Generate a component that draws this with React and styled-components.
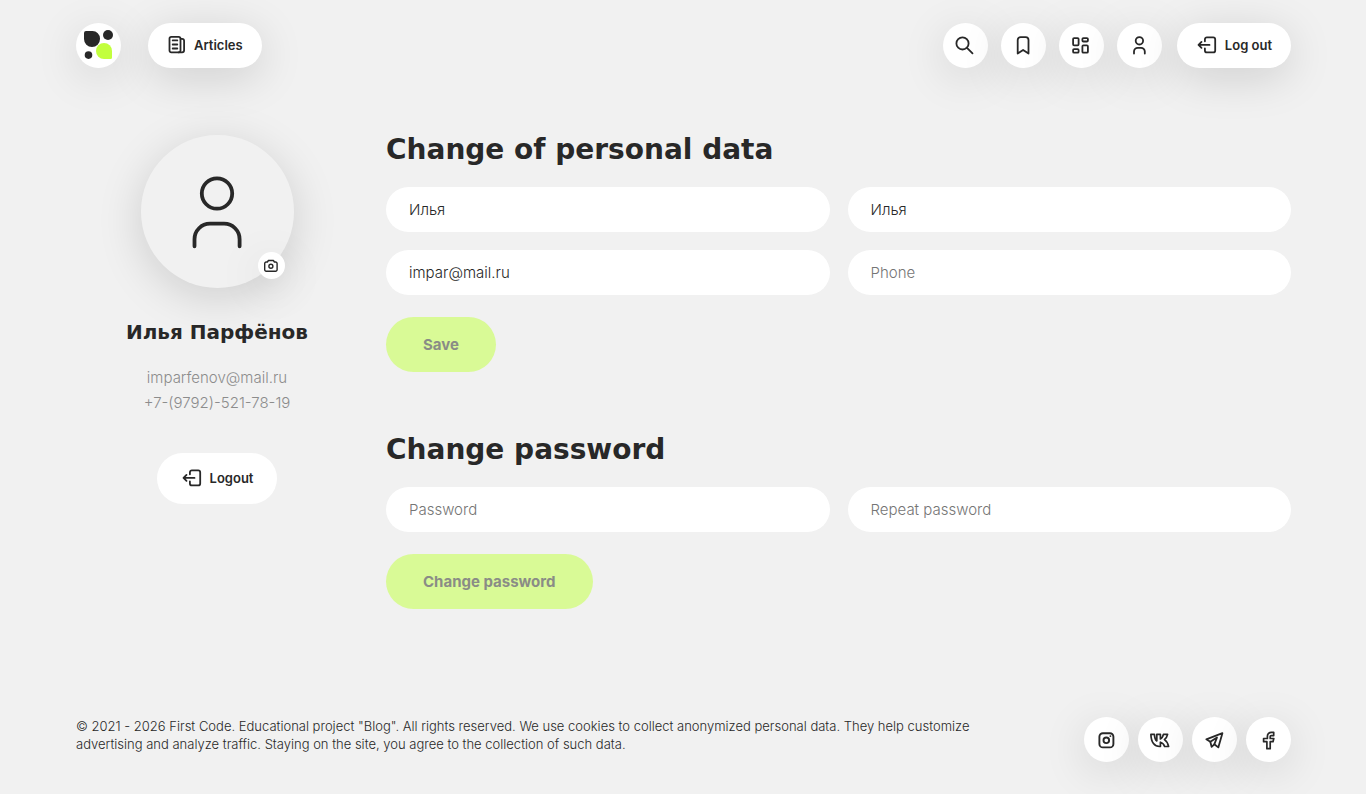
import React, { useState } from 'react';
import styled, { createGlobalStyle } from 'styled-components';

const GlobalStyle = createGlobalStyle`
  * {
    box-sizing: border-box;
  }
  body {
    margin: 0;
    background: #f1f1f1;
    color: #282828;
    font-family: Inter, "Open Sans", sans-serif;
    font-size: 14px;
  }
  h2, h3, p {
    margin: 0;
  }
  input, button {
    font-family: inherit;
  }
`

const initialProfile = {
  name: "Илья",
  surname: "Илья",
  email: "impar@mail.ru",
  phone: ""
}

const initialPasswords = {
  password: "",
  repeat: ""
}

const Page = styled.div`
  padding: 23px 75px 32px 76px;
`
const Header = styled.header`
  display: flex;
  justify-content: space-between;
  align-items: center;
  margin-bottom: 67px;
`
const HeaderSide = styled.nav`
  display: flex;
  align-items: center;
  gap: ${props => props.$gap}px;
`
const RoundLink = styled.a`
  display: flex;
  justify-content: center;
  align-items: center;
  flex-shrink: 0;
  width: 45px;
  height: 45px;
  border-radius: 50%;
  background: white;
  color: inherit;
  box-shadow: 0 9px 45px rgba(0, 0, 0, 0.13);
`
const Pill = styled.button`
  display: flex;
  align-items: center;
  gap: 7px;
  height: ${props => props.$flat ? 51 : 45}px;
  padding: 0 ${props => props.$flat ? 24 : 19}px 2px;
  border: none;
  border-radius: 26px;
  background: white;
  color: inherit;
  font-size: 13px;
  font-weight: 600;
  text-decoration: none;
  cursor: pointer;
  box-shadow: ${props => props.$flat ? 'none' : '0 9px 45px rgba(0, 0, 0, 0.15)'};
`
const Content = styled.div`
  display: flex;
  align-items: flex-start;
  gap: 28px;
  margin-bottom: 108px;
`
const Sidebar = styled.aside`
  display: flex;
  flex-direction: column;
  align-items: center;
  flex: 0 0 282px;
`
const Avatar = styled.div`
  position: relative;
  display: flex;
  justify-content: center;
  align-items: center;
  width: 153px;
  height: 153px;
  margin-bottom: 30px;
  border-radius: 50%;
  box-shadow: 0 9px 45px rgba(0, 0, 0, 0.15);
`
const CameraButton = styled.button`
  position: absolute;
  right: 9px;
  bottom: 9px;
  display: flex;
  justify-content: center;
  align-items: center;
  width: 27px;
  height: 27px;
  padding: 0;
  border: none;
  border-radius: 50%;
  background: white;
  color: inherit;
  cursor: pointer;
  box-shadow: 0 9px 45px rgba(0, 0, 0, 0.13);
`
const UserName = styled.h3`
  margin-bottom: 19px;
  font-family: "DejaVu Sans", sans-serif;
  font-size: 20px;
  line-height: 28px;
`
const Contact = styled.p`
  color: #8c8c8c;
  font-size: 15px;
  font-weight: 300;
  line-height: 25px;
`
const Contacts = styled.div`
  margin-bottom: 38px;
  text-align: center;
`
const Main = styled.main`
  flex: 1;
  min-width: 0;
`
const Form = styled.form`
  & + & {
    margin-top: 63px;
  }
`
const Title = styled.h2`
  margin-bottom: 22px;
  font-family: "DejaVu Sans", sans-serif;
  font-size: 28px;
  line-height: 30px;
`
const Fields = styled.div`
  display: grid;
  grid-template-columns: 1fr 1fr;
  gap: 18px;
  margin-bottom: 22px;
`
const Input = styled.input`
  width: 100%;
  height: 45px;
  padding: 0 23px;
  border: none;
  border-radius: 23px;
  background: white;
  color: #282828;
  font-size: 15px;
  font-weight: 300;
  outline: none;

  &::placeholder {
    color: #757575;
    opacity: 1;
  }
`
const Submit = styled.button`
  height: 55px;
  padding: 0 37px;
  border: none;
  border-radius: 28px;
  background: #d9fa96;
  color: #8a8c86;
  font-size: 15px;
  font-weight: 700;
`
const Footer = styled.footer`
  display: flex;
  justify-content: space-between;
  align-items: center;
  gap: 80px;
`
const Copyright = styled.p`
  margin-bottom: 9px;
  font-size: 13px;
  font-weight: 300;
  line-height: 18px;
`
const Socials = styled.div`
  display: flex;
  gap: 9px;
`
const Svg = styled.svg`
  flex-shrink: 0;
  fill: none;
  stroke: currentColor;
  stroke-linecap: round;
  stroke-linejoin: round;
`

const Icon = ({ width = 24, height = width, stroke = 1.8, children }) => (
  <Svg width={width} height={height} viewBox={`0 0 ${width} ${height}`} strokeWidth={stroke} aria-hidden="true">
    {children}
  </Svg>
)

const LogoIcon = () => (
  <Icon width={45} stroke={0}>
    <path fill="#282828" d="M8 10a2 2 0 0 1 2-2h6.500a7.500 7.500 0 0 1 7.500 7.500v.5a8 8 0 0 1-16 0z" />
    <circle fill="#282828" cx="32" cy="12" r="5" />
    <path fill="#c2ff3d" d="M20 28a8 8 0 0 1 16 0v6.500a1.500 1.500 0 0 1-1.500 1.500H28a8 8 0 0 1-8-8z" />
    <circle fill="#282828" cx="12.500" cy="32.100" r="3.800" />
  </Icon>
)

const ArticlesIcon = () => (
  <Icon width={20} stroke={1.8}>
    <rect x="2.500" y="1.800" width="11" height="15.500" rx="1.800" />
    <path d="M13.500 3.800h1.600a2 2 0 0 1 2 2v9.500a2 2 0 0 1-2 2h-3.500M5.700 5.400h4.600M5.700 9.500h4.600M5.700 13.500h4.600" />
  </Icon>
)

const LogoutIcon = () => (
  <Icon width={22}>
    <path d="M8.900 7.300V5.400a2 2 0 0 1 2-2h6.300a2 2 0 0 1 2 2v11a2 2 0 0 1-2 2h-6.300a2 2 0 0 1-2-2v-1.900M13.500 10.900H2.700M5.500 7.900l-3 3 3 3" />
  </Icon>
)

const SearchIcon = () => (
  <Icon>
    <circle cx="9.500" cy="9.400" r="6.100" />
    <path d="M14 13.900l5.500 5.400" />
  </Icon>
)

const BookmarkIcon = () => (
  <Icon>
    <path d="M6.700 19.600V6a2.900 2.900 0 0 1 2.900-2.900h5a2.900 2.900 0 0 1 2.900 2.900v13.600l-5.400-3.700z" />
  </Icon>
)

const GridIcon = () => (
  <Icon stroke={1.8}>
    <rect x="4.100" y="4.100" width="5.500" height="7.200" rx="1" />
    <rect x="4.100" y="15.100" width="5.500" height="3.600" rx="1" />
    <rect x="13.400" y="4.100" width="5.500" height="3.400" rx="1" />
    <rect x="13.400" y="11.400" width="5.500" height="7.300" rx="1" />
  </Icon>
)

const UserIcon = () => (
  <Icon>
    <circle cx="12.400" cy="6.800" r="3.700" />
    <path d="M7 19.600v-2a3.800 3.800 0 0 1 3.800-3.800H14a3.800 3.800 0 0 1 3.800 3.800v2" />
  </Icon>
)

const AvatarIcon = () => (
  <Icon width={80} stroke={3.8}>
    <circle cx="40" cy="21.500" r="15.200" />
    <path d="M17.500 74.300V67.200a15.500 15.500 0 0 1 15.500-15.500h14.100a15.500 15.500 0 0 1 15.500 15.500v7.100" />
  </Icon>
)

const CameraIcon = () => (
  <Icon width={18} stroke={1.400}>
    <path d="M2.700 6.500a1.500 1.500 0 0 1 1.500-1.500h1.200l1-1.500h5l1 1.500h1.200a1.500 1.500 0 0 1 1.500 1.500v6.200a1.500 1.500 0 0 1-1.500 1.500H4.200a1.500 1.500 0 0 1-1.500-1.500z" />
    <circle cx="8.900" cy="9.300" r="2" />
  </Icon>
)

const InstagramIcon = () => (
  <Icon stroke={1.900}>
    <rect x="4.400" y="5.200" width="14" height="14.200" rx="3.500" />
    <circle cx="11.300" cy="12.300" r="2.800" />
    <path d="M15.400 8.100v.01" />
  </Icon>
)

const VkIcon = () => (
  <Icon stroke={1.700}>
    <path d="M1.900 6.400h3.500c.2 3.500 1.200 5.800 2.400 6.500V6.400h3.600v4.500c1.400-.4 2.500-2.400 3-4.500h4.200c-.5 2.400-1.700 4.100-3.200 5.200 1.900 1.200 3.500 3.500 4.200 6.900h-4c-.6-2-2.200-3.800-4.200-4.300v4.300C5.400 18.900 2.100 14.200 1.900 6.400z" />
  </Icon>
)

const TelegramIcon = () => (
  <Icon stroke={1.800}>
    <path d="M19.400 5.200L3.300 11.300l4 2.400 1.300 5.100 2.700-2.500 4 3.100z" />
    <path d="M7.300 13.700l6.700-4.200-2.700 6.800" />
  </Icon>
)

const FacebookIcon = () => (
  <Icon stroke={1.700}>
    <path d="M16.700 4.300h-2.300a4 4 0 0 0-4 4v2.200H6.600v3.200h3.300v7h3.300v-7h2.800l.8-3.200h-3.600V8.600a1 1 0 0 1 1-1h2.500z" />
  </Icon>
)

const App = () => {
  const [profile, setProfile] = useState(initialProfile);
  const [passwords, setPasswords] = useState(initialPasswords);

  const handleProfile = e => {
    setProfile({
      ...profile,
      [e.target.name]: e.target.value
    });
  };

  const handlePasswords = e => {
    setPasswords({
      ...passwords,
      [e.target.name]: e.target.value
    });
  };

  const submit = e => {
    e.preventDefault();
  }

  return (<>
    <GlobalStyle />
    <Page>
      <Header>
        <HeaderSide $gap={27}>
          <RoundLink href="#home" aria-label="Home"><LogoIcon /></RoundLink>
          <Pill as="a" href="#articles"><ArticlesIcon />Articles</Pill>
        </HeaderSide>
        <HeaderSide $gap={15}>
          <HeaderSide as="div" $gap={13}>
            <RoundLink href="#search" aria-label="Search"><SearchIcon /></RoundLink>
            <RoundLink href="#bookmarks" aria-label="Bookmarks"><BookmarkIcon /></RoundLink>
            <RoundLink href="#dashboard" aria-label="Dashboard"><GridIcon /></RoundLink>
            <RoundLink href="#profile" aria-label="Profile"><UserIcon /></RoundLink>
          </HeaderSide>
          <Pill type="button"><LogoutIcon />Log out</Pill>
        </HeaderSide>
      </Header>

      <Content>
        <Sidebar>
          <Avatar>
            <AvatarIcon />
            <CameraButton type="button" aria-label="Change photo"><CameraIcon /></CameraButton>
          </Avatar>
          <UserName>Илья Парфёнов</UserName>
          <Contacts>
            <Contact>imparfenov@mail.ru</Contact>
            <Contact>+7-(9792)-521-78-19</Contact>
          </Contacts>
          <Pill type="button" $flat><LogoutIcon />Logout</Pill>
        </Sidebar>

        <Main>
          <Form onSubmit={submit}>
            <Title>Change of personal data</Title>
            <Fields>
              <Input name="name" aria-label="Name" placeholder="Name" value={profile.name} onChange={handleProfile} />
              <Input name="surname" aria-label="Surname" placeholder="Surname" value={profile.surname} onChange={handleProfile} />
              <Input name="email" type="email" aria-label="Email" placeholder="Email" value={profile.email} onChange={handleProfile} />
              <Input name="phone" type="tel" aria-label="Phone" placeholder="Phone" value={profile.phone} onChange={handleProfile} />
            </Fields>
            <Submit disabled>Save</Submit>
          </Form>

          <Form onSubmit={submit}>
            <Title>Change password</Title>
            <Fields>
              <Input name="password" type="password" aria-label="Password" placeholder="Password" value={passwords.password} onChange={handlePasswords} />
              <Input name="repeat" type="password" aria-label="Repeat password" placeholder="Repeat password" value={passwords.repeat} onChange={handlePasswords} />
            </Fields>
            <Submit disabled>Change password</Submit>
          </Form>
        </Main>
      </Content>

      <Footer>
        <Copyright>
          © 2021 - 2026 First Code. Educational project "Blog". All rights reserved. We use cookies to collect anonymized personal data. They help customize advertising and analyze traffic. Staying on the site, you agree to the collection of such data.
        </Copyright>
        <Socials>
          <RoundLink href="#instagram" aria-label="Instagram"><InstagramIcon /></RoundLink>
          <RoundLink href="#vk" aria-label="VK"><VkIcon /></RoundLink>
          <RoundLink href="#telegram" aria-label="Telegram"><TelegramIcon /></RoundLink>
          <RoundLink href="#facebook" aria-label="Facebook"><FacebookIcon /></RoundLink>
        </Socials>
      </Footer>
    </Page>
  </>);
}

export default App;
